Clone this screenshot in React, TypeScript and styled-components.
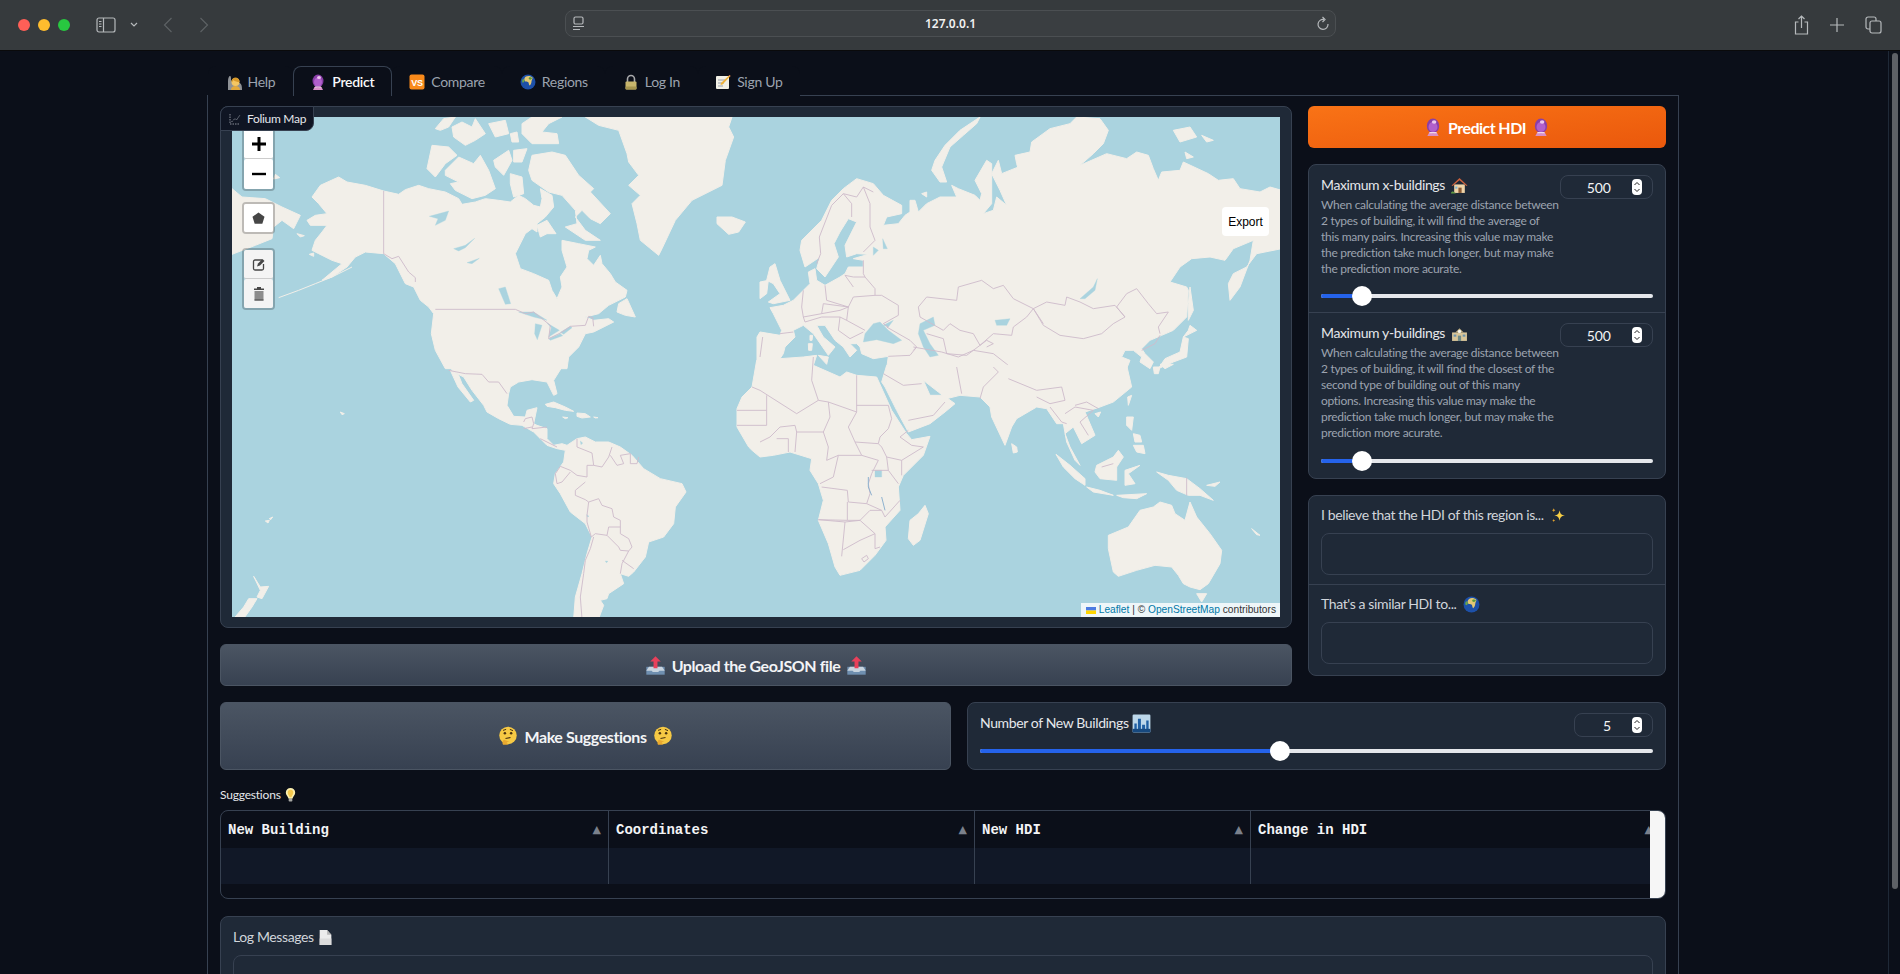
import React from 'react'
import styled, { createGlobalStyle } from 'styled-components'

const GlobalStyle = createGlobalStyle`
  html, body { margin: 0; padding: 0; height: 100%; overflow: hidden; background: #0b0f19; }
  * { box-sizing: border-box; }
  #root { font-family: Lato, "Noto Sans", sans-serif; color: #f3f4f6; }
`

/* ---------- map data, in 3x pixels of each map quarter ---------- */

type Quarter = { x: number; y: number; land: string[]; water: string[]; borders: string[]; rivers?: string[]; strips?: string[] }

const QUARTERS: Quarter[] = [
  {
    x: 0,
    y: 0,
    land: [
      '240,240 265,205 320,180 345,195 400,205 455,222 500,232 520,218 560,205 590,215 640,225 680,245 690,262 730,255 760,245 800,250 835,255 860,235 880,245 905,265 925,270 930,245 925,215 960,235 965,270 940,300 915,320 915,345 900,335 880,350 850,410 865,455 905,470 950,490 960,520 975,545 990,510 985,480 1005,450 990,400 990,370 1040,380 1090,390 1070,400 1065,425 1085,445 1105,415 1110,440 1135,470 1150,495 1185,520 1180,540 1130,565 1100,590 1060,600 1085,610 1130,605 1145,615 1085,645 1060,650 1040,690 1010,720 1005,755 640,755 610,700 598,650 605,590 590,570 565,550 545,510 520,500 490,440 455,410 400,405 370,420 345,450 300,480 270,490 330,440 300,430 260,410 240,400 250,370 270,345 285,325 235,325 225,310 250,295 285,290 260,260',
      '1160,560 1185,545 1210,600 1180,595 1155,585',
      '600,85 650,90 675,115 640,140 610,180 585,155',
      '640,160 680,120 725,140 745,115 770,160 790,215 760,235 720,245 670,220 655,200 680,195 640,175',
      '890,160 900,115 960,105 1000,115 1040,175 1085,215 1075,225 1135,290 1105,320 1075,305 1050,280 1030,300 1060,340 1105,370 1060,370 1000,330 1035,320 1030,280 990,235 950,225 900,190',
      '785,130 830,100 840,130 815,175 790,150',
      '845,100 885,95 870,135 845,135',
      '835,170 870,180 875,230 845,240 835,200',
      '915,325 945,310 972,350 945,350 925,360',
      '610,35 635,5 670,0 650,30 625,40',
      '660,30 690,15 720,30 730,5 760,50 730,70 700,85 665,60',
      '770,20 820,10 830,50 790,60',
      '835,50 855,45 860,75 840,75',
      '870,20 900,0 990,0 950,20 930,45 975,50 980,80 900,80 870,50',
      '1060,0 1100,25 1160,40 1185,110 1190,135 1220,175 1190,205 1225,235 1200,260 1215,320 1225,370 1280,415 1290,395 1330,310 1380,250 1470,205 1480,130 1505,60 1490,30 1500,0',
      '1455,300 1500,300 1540,315 1520,345 1490,352 1455,320',
      '0,215 30,240 100,245 150,270 205,295 185,335 150,310 125,330 120,365 70,385 0,412',
      '130,172 143,182 125,186',
      '232,412 245,408 245,418',
      '195,350 217,356 205,360',
    ],
    water: [
      '592,298 650,282 640,310 610,325 618,305',
      '665,395 700,385 728,364 700,392 680,402',
      '705,437 742,424 720,440',
      '800,515 820,510 836,560 820,562',
      '860,585 905,585 945,610 905,600 880,592',
      '910,620 930,625 916,668 908,650',
      '945,618 982,640 950,660 958,632',
      '950,665 985,650 992,656 955,670',
      '985,646 1015,628 1020,632 995,652',
    ],
    borders: [
      '610,577 850,577 880,590 905,585 955,625 950,665 985,648 1015,628 1060,625 1070,598 1082,602 1085,628',
      '455,222 455,410 480,425 500,418 530,465 550,482 550,495',
    ],
    strips: ['360,450 300,480 250,500 200,520 140,542'],
  },
  {
    x: 1584,
    y: 0,
    land: [
      '-9,660 0,645 60,655 65,640 40,590 30,572 70,565 100,550 130,520 150,500 145,465 165,455 170,490 195,505 240,480 255,470 265,450 310,450 310,430 280,425 325,412 290,410 260,420 255,385 290,315 265,305 240,345 222,380 235,420 215,450 195,480 170,455 180,420 165,430 135,450 120,400 125,370 185,310 215,250 250,215 290,185 340,200 370,235 425,265 425,290 380,300 370,325 415,320 435,295 450,285 450,250 465,250 475,285 500,260 540,240 590,240 575,205 595,215 645,235 660,250 665,230 645,190 680,130 695,140 695,260 670,290 700,280 710,240 740,265 720,220 695,170 715,130 725,170 775,150 790,210 770,140 765,115 810,105 815,75 870,35 930,20 950,0 1020,5 1045,40 1030,80 1000,110 960,145 1040,110 1100,125 1130,105 1165,115 1180,155 1195,190 1205,165 1260,160 1270,135 1345,170 1375,190 1420,185 1440,215 1500,225 1530,210 1565,220 1565,395 1490,410 1460,450 1420,470 1405,500 1410,550 1440,510 1470,430 1480,370 1420,395 1395,430 1350,420 1295,425 1260,450 1230,495 1280,510 1285,520 1280,600 1240,640 1205,655 1170,670 1145,695 1155,710 1180,735 1170,755 1140,735 1145,720 1120,700 1095,700 1085,720 1110,730 1100,755 380,755 385,718 340,725 305,710 300,690 290,680 270,680 290,700 270,720 250,690 225,670 195,625 170,625 190,660 225,690 205,715 160,650 130,625 100,640 105,660 75,690 70,710 50,740 20,745 -9,745',
      '30,450 45,440 60,490 90,550 40,560 25,555 60,530 40,500 20,490',
      '0,495 25,490 20,530 0,545',
      '660,0 600,40 555,85 525,130 515,160 540,195 560,195 545,150 570,90 610,55 650,20',
      '1240,40 1290,30 1310,60 1260,75',
      '1325,55 1360,70 1340,75',
      '1275,105 1300,120 1280,125',
      '485,230 500,225 500,240',
      '1270,660 1310,640 1290,625 1285,640',
      '1270,660 1285,665 1280,720 1240,735 1195,755 1215,725 1260,705',
      '1290,510 1300,580 1285,610 1285,560',
      '145,680 157,680 155,700 146,700',
      '150,655 158,655 156,670 150,670',
      '175,715 205,720 200,742',
    ],
    water: [
      '315,650 340,620 360,615 385,640 425,670 400,680 350,668 310,675',
      '370,625 400,610 385,630',
      '480,620 520,600 525,625 490,640 510,680 535,715 510,720 490,690 475,650',
      '705,610 750,605 740,625 710,625',
      '960,545 1000,510 1012,485 1005,520 975,545',
      '340,390 355,400 340,415',
      '368,365 382,395 370,395',
    ],
    borders: [
      '250,230 215,265 178,360 182,410 170,440',
      '250,230 275,260 275,300',
      '250,230 290,240 310,210 340,225',
      '310,210 330,260 330,330 345,370 310,405',
      '310,430 310,470 315,480 280,480 255,475 280,510',
      '315,480 345,515 345,535 365,535 415,565 415,595 370,620 385,630',
      '195,505 200,550 265,570 280,540 345,535',
      '130,520 125,570 130,600 185,590 190,560 265,570 260,610 315,640',
      '130,600 135,615 185,600 240,600 260,610',
      '185,590 240,580 265,570',
      '100,645 60,650',
      '240,600 235,640 270,665 310,645',
      '380,630 450,670 470,690 460,700',
      '385,718 450,715 470,690',
      '475,570 500,540 590,550 595,510 665,490 700,515 730,505 760,545 820,575 850,620',
      '820,575 860,555 915,565 920,540 960,555 1000,575 1065,565 1095,600 1060,620 1025,650 970,665 900,655 850,625 820,575',
      '1095,600 1070,570 1100,530 1130,515 1165,560 1190,590 1225,585 1195,630 1200,650',
      '475,570 480,600 550,640 570,620 600,640 640,650 660,685 700,650 755,655 760,630 800,600 820,575',
      '500,650 550,665 560,710 620,715 660,685',
      '660,685 680,670 700,680 680,690',
      '460,690 545,705 595,720 640,700 700,710 745,745',
      '1145,700 1185,680 1200,655',
      '8,660 0,720',
    ],
  },
  {
    x: 0,
    y: 750,
    land: [
      '650,-5 1000,-5 990,0 965,40 975,80 965,85 945,45 900,38 860,45 835,60 830,80 825,115 845,148 880,150 885,130 915,122 905,170 915,175 945,185 945,215 965,235 990,230 1005,235 1035,215 1060,210 1090,225 1130,225 1165,240 1200,265 1235,305 1285,335 1350,350 1362,375 1330,420 1325,470 1295,510 1250,525 1240,570 1205,615 1190,628 1165,620 1175,650 1130,680 1125,695 1105,700 1115,715 1100,755 1025,755 1030,690 1050,620 1065,560 1080,510 1060,470 1015,435 985,380 965,350 970,320 995,285 1000,250 975,245 945,235 925,215 905,195 870,175 835,172 800,155 765,135 755,115 720,70 695,30 665,15',
      '655,10 678,60 715,105 725,100 690,50 680,25',
      '940,112 965,105 1000,120 1025,133 1000,130 970,122 945,118',
      '1035,138 1060,140 1075,150 1050,153 1035,148',
      '992,150 1008,152 1000,155',
      '1085,150 1098,152 1090,153',
      '325,135 337,140 330,143',
      '100,462 112,460 108,468',
      '112,455 122,450 116,458',
      '65,628 85,660 110,658 90,695 75,690 85,670',
      '50,695 75,695 60,720 35,755 5,755 35,720',
    ],
    water: ['1045,222 1052,228 1047,233', '1064,443 1071,448 1066,450', '1120,582 1128,583 1123,587'],
    borders: [
      '650,10 700,20 750,22 770,45 800,45 825,80',
      '875,165 880,155 900,150 905,170 900,185 945,180',
      '875,185 900,180',
      '925,215 945,225 975,240',
      '1035,215 1035,240 1080,258 1085,295 1110,300 1130,270 1140,240',
      '1135,265 1155,295 1175,290 1165,265 1195,260 1195,290 1215,290 1220,270',
      '985,298 1015,310 1035,325 1065,330 1065,295 1085,295',
      '985,298 970,320 975,350 990,345 1015,315',
      '1060,345 1030,370 1030,385 1060,398 1070,405 1100,395 1110,415 1140,425 1145,450 1165,460 1165,500 1190,515 1200,540 1190,552 1170,590 1165,620',
      '1070,405 1065,445 1065,465 1078,510 1090,500 1125,505 1160,540 1165,550 1190,552',
      '1125,505 1130,480 1165,480',
      '1085,510 1075,545 1060,580 1055,620 1045,690 1050,755',
      '1170,580 1205,605',
    ],
  },
  {
    x: 1584,
    y: 750,
    land: [
      '-69,125 -54,90 -24,60 -10,-20 20,-25 60,-25 130,-30 170,-35 160,-5 240,30 260,15 290,25 350,30 395,130 440,200 455,218 510,208 490,265 430,325 415,360 420,430 375,480 378,520 345,565 300,610 240,625 225,600 205,530 175,460 190,400 175,350 150,310 155,275 90,255 40,265 0,270 -24,250 -34,240 -69,180',
      '380,-5 1100,-5 1115,60 1060,105 1020,120 975,135 1005,205 965,230 940,180 915,200 930,240 960,295 945,280 920,225 910,170 890,170 860,125 830,120 770,155 755,180 735,235 695,150 690,120 660,90 600,85 560,95 535,75 490,40 510,85 550,85 585,110 555,135 510,170 445,195 410,130 375,60 365,45',
      '1180,0 1200,0 1195,20 1183,20',
      '1200,-8 1240,-8 1215,5',
      '755,230 770,240 772,255 760,258',
      '1103,90 1115,85 1105,115',
      '1005,140 1022,135 1015,150',
      '1100,150 1120,150 1115,190 1100,175',
      '1120,235 1150,235 1155,260 1130,255',
      '1120,200 1140,205 1145,225 1125,225',
      '1010,295 1060,270 1075,250 1090,270 1070,300 1070,340 1020,335 1005,315',
      '888,262 930,295 975,335 975,355 945,335 910,300',
      '980,360 1020,370 1060,385 1000,375',
      '1095,310 1140,295 1105,320 1125,350 1095,355',
      '1190,315 1225,325 1280,335 1320,365 1360,400 1320,385 1285,385 1250,370 1225,340',
      '1340,355 1380,345 1365,358',
      '1070,385 1160,380 1130,395 1090,392',
      '1045,505 1105,480 1140,430 1180,420 1200,405 1235,415 1245,440 1275,460 1290,405 1310,450 1350,500 1385,550 1380,590 1345,650 1320,668 1290,660 1270,650 1255,625 1235,600 1185,595 1130,610 1075,628 1060,615 1045,545',
      '1310,680 1340,680 1325,705',
      '495,415 505,440 480,520 460,535 445,515 450,460 475,440',
      '1475,485 1500,505 1490,503',
    ],
    water: ['345,310 365,310 365,330 345,330'],
    borders: [
      '-24,60 0,70 110,140 175,100 205,105 290,135 290,25',
      '160,-30 155,40 175,100',
      '290,115 385,115',
      '290,135 265,180 285,225 305,265',
      '205,105 210,150 190,195 205,240 200,280',
      '385,115 395,155 385,185 360,210 355,230 285,225',
      '-69,130 20,130 20,85',
      '20,130 20,175 -69,175',
      '0,225 30,210 60,180 105,175 110,195 190,195',
      '50,215 85,215 85,255',
      '110,195 105,255',
      '200,280 235,265 305,265 355,280',
      '355,230 365,240 380,270 425,280 490,240 455,235 420,210 445,190',
      '235,265 220,330 180,350',
      '355,280 335,320 325,350 330,380 320,410 265,405 262,370 185,360',
      '425,280 425,325',
      '380,270 385,310 415,350',
      '335,310 385,310',
      '262,405 262,460 175,458',
      '262,460 300,460 330,430 365,430 320,410',
      '365,430 375,450 420,400',
      '175,458 255,465 245,568',
      '255,465 300,460 345,500 300,520 250,548',
      '345,500 345,545 360,540',
      '305,575 320,565 325,575 312,585 305,575',
      '370,20 430,55 485,50',
      '445,160 520,145 555,105',
      '590,0 605,80',
      '660,95 670,60 715,15 700,0',
      '745,35 830,70 905,60 915,100 870,110 830,90',
      '870,120 905,165 920,170',
      '915,140 945,120 1000,130 960,165 985,205',
      '945,115 980,105 1015,125',
      '1280,332 1280,385',
      '1025,300 1060,290',
    ],
    rivers: ['325,330 325,360 335,385', '365,390 375,430'],
  },
]

const HOUSE_TEXT = [
  'When calculating the average distance between',
  '2 types of building, it will find the average of',
  'this many pairs. Increasing this value may make',
  'the prediction take much longer, but may make',
  'the prediction more acurate.',
]

const SCHOOL_TEXT = [
  'When calculating the average distance between',
  '2 types of building, it will find the closest of the',
  'second type of building out of this many',
  'options. Increasing this value may make the',
  'prediction take much longer, but may make the',
  'prediction more acurate.',
]

/* ---------- emoji drawings ---------- */

type EmojiKind =
  | 'person' | 'ball' | 'vs' | 'globe' | 'lock' | 'memo' | 'house' | 'school'
  | 'sparkles' | 'tray' | 'thinking' | 'city' | 'bulb' | 'page'

const EmojiSvg = styled.svg<{ $size: number }>`
  width: ${(p) => p.$size}px;
  height: ${(p) => p.$size}px;
  flex: none;
  display: inline-block;
`

const Emoji: React.FC<{ kind: EmojiKind; size?: number }> = ({ kind, size = 16 }) => {
  const art: Record<EmojiKind, React.ReactNode> = {
    person: (
      <>
        <path d="M2 16V7c0-3 1-5 2-5s1 2 1 4l2 3h6c2 0 3 2 3 7z" fill="#8f9296" />
        <circle cx="9.500" cy="8" r="4" fill="#f5c662" />
        <path d="M5.500 8c0-3 2-4.500 4-4.500s4 1.500 4 4.500c-2 0-5-.5-6-2-.5 1-1 2-2 2z" fill="#d99a2b" />
        <path d="M5 16c0-3 2-4 4.500-4s4.500 1 4.500 4z" fill="#e2a83c" />
      </>
    ),
    ball: (
      <>
        <path d="M4.500 13h7l1.500 3H3z" fill="#d890c8" />
        <ellipse cx="8" cy="7" rx="5.500" ry="6.500" fill="#8a3fa8" />
        <ellipse cx="8" cy="8" rx="4" ry="4.500" fill="#b160cc" />
        <ellipse cx="9" cy="3.500" rx="2" ry="1.500" fill="#ecc6ee" />
        <path d="M5 12.500h6l.5 1h-7z" fill="#f3d9e8" />
      </>
    ),
    vs: (
      <>
        <rect x="0.500" y="0.500" width="15" height="15" rx="2" fill="#f98a1a" />
        <text x="8" y="11.500" fontSize="9" fontWeight="700" textAnchor="middle" fill="#fff" fontFamily="Liberation Sans, sans-serif">VS</text>
      </>
    ),
    globe: (
      <>
        <circle cx="8" cy="8" r="7.500" fill="#1d50a8" />
        <path d="M6 2.500c2-1 5-.5 6.500 1 .5 1-1 2.500-1 4 0 1.500-1 3.500-2 4-1-1-.5-3-1.500-3.500s-3 0-3.500-1.500 0-3 1.500-4z" fill="#e3c874" />
        <path d="M9 3.500c1-.5 2.500 0 3 .5.200 1-1.500 2-2.500 1.500S8.500 4 9 3.500z" fill="#5b9a3c" />
        <path d="M3 5c1 0 1.500 1 1.500 2S3 9 2.500 8.500 2 5.500 3 5z" fill="#6aa64a" />
      </>
    ),
    lock: (
      <>
        <path d="M4.500 8V5a3.500 3.500 0 0 1 7 0v3" fill="none" stroke="#a9a9ab" strokeWidth="1.600" />
        <rect x="2.500" y="7.500" width="11" height="8" rx="1" fill="#c7b56c" />
        <rect x="2.500" y="12.500" width="11" height="3" rx="1" fill="#a6954f" />
      </>
    ),
    memo: (
      <>
        <rect x="1" y="2" width="13" height="13" rx="1" fill="#f2f0e6" />
        <path d="M3 6h8M3 9h6M3 12h5" stroke="#9aa0ad" strokeWidth="1" />
        <path d="M14.500 1l1 1-8 8.500-2 .5.500-2z" fill="#f0b33c" />
        <path d="M14 1.500l1 1 .5-.5-1-1z" fill="#e45b5b" />
      </>
    ),
    house: (
      <>
        <rect x="3" y="7" width="10" height="8" fill="#efd4a8" />
        <path d="M8 1l7.500 7-1 .5L8 3 1.500 8.500l-1-.5z" fill="#c9603c" />
        <rect x="7" y="10" width="3" height="5" fill="#8b5a34" />
        <rect x="4" y="9" width="2" height="2" fill="#7fb8d8" />
        <path d="M0 15.500c0-2 2-2 2.500-1.500s1.500 0 2 1.500z" fill="#5f9a42" />
      </>
    ),
    school: (
      <>
        <rect x="1" y="7" width="14" height="8" fill="#d8c598" />
        <path d="M4 7l4-4 4 4z" fill="#b8a77c" />
        <circle cx="8" cy="6" r="1.600" fill="#f6f6ee" />
        <rect x="2.500" y="9" width="2.500" height="2" fill="#6d95ae" />
        <rect x="11" y="9" width="2.500" height="2" fill="#6d95ae" />
        <rect x="6.500" y="10" width="3" height="5" fill="#6f8a86" />
      </>
    ),
    sparkles: (
      <>
        <path d="M9 3c.5 3 1.500 4.500 5 5-3.500.5-4.500 2-5 5-.5-3-1.500-4.500-5-5 3.500-.5 4.500-2 5-5z" fill="#f7ce46" />
        <path d="M3.500 1c.2 1.200.6 1.800 1.800 2-1.200.2-1.600.8-1.800 2-.2-1.200-.6-1.800-1.800-2 1.200-.2 1.600-.8 1.800-2z" fill="#e0a230" />
        <path d="M3.500 11c.2 1 .5 1.500 1.500 1.700-1 .2-1.300.7-1.500 1.700-.2-1-.5-1.500-1.500-1.700 1-.2 1.300-.7 1.500-1.700z" fill="#e0a230" />
      </>
    ),
    tray: (
      <>
        <path d="M1 9h14v6H1z" fill="#6f8fb0" />
        <path d="M3 9h10l2 3H11l-1 1H6l-1-1H1z" fill="#c7d3de" />
        <path d="M8 1l4 4H9.500v5h-3V5H4z" fill="#e8405a" />
      </>
    ),
    thinking: (
      <>
        <circle cx="8" cy="7.500" r="7" fill="#f6c944" />
        <circle cx="5.500" cy="5.800" r="1" fill="#4a3310" />
        <circle cx="10.500" cy="5.800" r="1" fill="#4a3310" />
        <path d="M4 3.500l2.500-.8M9.500 2.700l2.500 1" stroke="#4a3310" strokeWidth=".8" />
        <path d="M6 10l4-.8" stroke="#4a3310" strokeWidth="1" />
        <path d="M4 15c-1-2 0-4 1-4l4 1.500-2 .5 1 2z" fill="#e9a92f" />
      </>
    ),
    city: (
      <>
        <rect x="0.500" y="0.500" width="15" height="15" rx="1" fill="#bcd7ea" />
        <path d="M2 15V8h2v7zM5 15V4h2.500v11zM8.500 15V9H11v6zM12 15V5.500h2V15z" fill="#1f5fa3" />
        <rect x="0.500" y="12.500" width="15" height="3" fill="#17497f" />
      </>
    ),
    bulb: (
      <>
        <path d="M8 1a5 5 0 0 1 5 5c0 2.500-2 3.500-3 6.500H6C5 9.500 3 8.500 3 6a5 5 0 0 1 5-5z" fill="#fbeeb0" />
        <path d="M8 3a3 3 0 0 1 3 3c0 1.500-1.500 3-2 5H7c-.5-2-2-3.500-2-5a3 3 0 0 1 3-3z" fill="#f5c94e" />
        <rect x="6" y="12.500" width="4" height="3" rx="1" fill="#a8a8a4" />
      </>
    ),
    page: (
      <>
        <path d="M2.500 1h7l4 4.500V15h-11z" fill="#ececec" />
        <path d="M9.500 1l4 4.500h-4z" fill="#b6b6b6" />
        <path d="M2.500 9h11v6h-11z" fill="#dcdcdc" />
      </>
    ),
  }
  return <EmojiSvg $size={size} viewBox="0 0 16 16">{art[kind]}</EmojiSvg>
}

/* ---------- browser chrome ---------- */

const Chrome = styled.header`
  height: 51px;
  background: #363a3d;
  border-bottom: 1px solid #0a0a0b;
  display: grid;
  grid-template-columns: 565px 771px 1fr;
  align-items: center;
`
const ChromeLeft = styled.div`
  display: flex;
  align-items: center;
  padding-left: 18px;
`
const Light = styled.span<{ $c: string }>`
  width: 12px;
  height: 12px;
  border-radius: 50%;
  background: ${(p) => p.$c};
  margin-right: 8px;
`
const ChromeIcon = styled.svg<{ $gap?: number; $dim?: boolean }>`
  flex: none;
  fill: none;
  stroke: ${(p) => (p.$dim ? '#5d6164' : '#b6b9bc')};
  stroke-width: 1.2;
  margin-left: ${(p) => p.$gap ?? 0}px;
`
const AddressBar = styled.div`
  height: 27px;
  margin-top: -3px;
  border: 1px solid #4b4f52;
  border-radius: 8px;
  background: #3a3e41;
  display: flex;
  align-items: center;
  justify-content: space-between;
  padding: 0 5px 0 6px;
`
const AddressText = styled.span`
  font: 600 12px "Noto Sans", sans-serif;
  color: #f1f1f1;
`
const ChromeRight = styled.div`
  display: flex;
  align-items: center;
  justify-content: flex-end;
  padding-right: 18px;
  gap: 21px;
`

/* ---------- page ---------- */

const Viewport = styled.div`
  height: 923px;
  display: flex;
  overflow: hidden;
`
const Page = styled.main`
  flex: 1;
  min-width: 0;
  padding: 15px 0 0 207px;
`
const Gutter = styled.div`
  width: 12px;
  border-left: 1px solid #1f2937;
  padding: 2px 2px 0 3px;
`
const Thumb = styled.div`
  height: 836px;
  border-radius: 4px;
  background: #5d6066;
`
const Tabs = styled.nav`
  display: flex;
  height: 29px;
  padding-left: 1px;
  position: relative;
  z-index: 1;
`
const Tab = styled.div<{ $active?: boolean }>`
  display: flex;
  align-items: center;
  gap: 6px;
  height: 30px;
  padding: 0 16.5px;
  font-size: 14px;
  letter-spacing: -0.3px;
  color: ${(p) => (p.$active ? '#f9fafb' : '#9ca3af')};
  font-weight: ${(p) => (p.$active ? 600 : 400)};
  background: #0b0f19;
  border: 1px solid ${(p) => (p.$active ? '#374151' : 'transparent')};
  border-bottom: 0;
  border-radius: 8px 8px 0 0;
`
const TabBody = styled.section`
  width: 1472px;
  height: 900px;
  border: 1px solid #374151;
  padding: 10px 12px;
`
const TopRow = styled.div`
  display: grid;
  grid-template-columns: 1072px 358px;
  gap: 16px;
`
const Column = styled.div`
  display: flex;
  flex-direction: column;
  gap: 16px;
`
const Panel = styled.div`
  background: #1f2937;
  border: 1px solid #374151;
  border-radius: 8px;
  overflow: hidden;
`
const MapBlock = styled(Panel)`
  position: relative;
  height: 522px;
  padding: 10px 12px 10px 11px;
  overflow: visible;
`
const MapLabel = styled.div`
  position: absolute;
  left: -1px;
  top: -1px;
  z-index: 5;
  height: 25px;
  width: 94px;
  display: flex;
  align-items: center;
  gap: 6px;
  padding-left: 8px;
  font-size: 12px;
  letter-spacing: -0.3px;
  color: #e5e7eb;
  background: #0f1523;
  border: 1px solid #374151;
  border-radius: 8px 0 8px 0;
`
const MapCanvas = styled.div`
  position: relative;
  width: 1048px;
  height: 500px;
  overflow: hidden;
  background: #aad3df;
  font-family: "Liberation Sans", Arial, sans-serif;
`
const MapSvg = styled.svg`
  display: block;
  width: 100%;
  height: 100%;
`
const Land = styled.polygon`
  fill: #f2efe9;
  stroke: #f2efe9;
  stroke-width: 3;
  stroke-linejoin: round;
`
const Water = styled.polygon`
  fill: #aad3df;
  stroke: #aad3df;
  stroke-width: 1;
  stroke-linejoin: round;
`
const Strip = styled.polyline`
  fill: none;
  stroke: #f2efe9;
  stroke-width: 3;
`
const Border = styled.polyline`
  fill: none;
  stroke: #cfbccb;
  stroke-width: 2.800;
  stroke-linejoin: round;
`
const River = styled.polyline`
  fill: none;
  stroke: #8fb2cf;
  stroke-width: 3;
`
const ControlBox = styled.div<{ $top: number }>`
  position: absolute;
  left: 10px;
  top: ${(p) => p.$top}px;
  width: 33px;
  border: 2px solid rgba(0, 0, 0, 0.22);
  border-radius: 4px;
  background-clip: padding-box;
`
const ControlButton = styled.div<{ $muted?: boolean; $last?: boolean; $h: number }>`
  height: ${(p) => p.$h}px;
  display: flex;
  align-items: center;
  justify-content: center;
  background: ${(p) => (p.$muted ? '#f4f4f4' : '#fff')};
  border-bottom: ${(p) => (p.$last ? 0 : '1px solid #ccc')};
  border-radius: 2px;
`
const Export = styled.div`
  position: absolute;
  left: 990px;
  top: 90px;
  width: 47px;
  height: 29px;
  background: #fff;
  border-radius: 4px;
  color: #000;
  font-size: 12px;
  display: flex;
  align-items: center;
  justify-content: center;
`
const Attribution = styled.div`
  position: absolute;
  right: 0;
  bottom: 0;
  height: 14px;
  padding: 0 4px 0 5px;
  background: rgba(255, 255, 255, 0.8);
  font-size: 10.200px;
  line-height: 14px;
  color: #333;
  display: flex;
  align-items: center;
  white-space: pre;
`
const MapLink = styled.span`
  color: #0078a8;
`
const Flag = styled.svg`
  width: 10px;
  height: 7px;
  margin-right: 3px;
`

const GreyButton = styled.div<{ $height: number }>`
  height: ${(p) => p.$height}px;
  display: flex;
  align-items: center;
  justify-content: center;
  gap: 6px;
  font-size: 16px;
  font-weight: 700;
  letter-spacing: -0.42px;
  color: #f3f4f6;
  background: linear-gradient(180deg, #4b5563, #374151);
  border: 1px solid #4b5563;
  border-radius: 6px;
`
const PredictButton = styled.div`
  height: 42px;
  display: flex;
  align-items: center;
  justify-content: center;
  gap: 6px;
  font-size: 16px;
  font-weight: 700;
  letter-spacing: -0.55px;
  color: #fff;
  background: linear-gradient(to bottom right, #f97316, #ea580c);
  border-radius: 6px;
`
const SettingBlock = styled.div<{ $last?: boolean; $height: number; $pad?: number }>`
  height: ${(p) => p.$height}px;
  padding: ${(p) => p.$pad ?? 10}px 12px 0 12px;
  border-bottom: ${(p) => (p.$last ? 0 : '1px solid #374151')};
`
const SettingHead = styled.div`
  display: flex;
  justify-content: space-between;
  align-items: flex-start;
`
const LabelRow = styled.div<{ $dim?: boolean }>`
  display: flex;
  align-items: center;
  gap: 3px;
  height: 20px;
  font-size: 14px;
  line-height: 20px;
  letter-spacing: -0.38px;
  white-space: pre;
  color: ${(p) => (p.$dim ? '#d1d5db' : '#e5e7eb')};
`
const Description = styled.div`
  font-size: 12px;
  line-height: 16px;
  letter-spacing: -0.3px;
  color: #9ca3af;
  white-space: nowrap;
  padding-top: 2px;
  width: 238px;
`
const NumberBox = styled.div<{ $width: number }>`
  width: ${(p) => p.$width}px;
  height: 24px;
  border: 1px solid #374151;
  border-radius: 8px;
  display: flex;
  align-items: center;
  justify-content: flex-end;
  padding-right: 10px;
  gap: 21px;
  font-size: 14px;
  color: #f3f4f6;
`
const Spinner = styled.svg`
  width: 10px;
  height: 16px;
`
const SliderTrack = styled.div<{ $top: number }>`
  position: relative;
  height: 4px;
  margin-top: ${(p) => p.$top}px;
  background: #e5e7eb;
  border-radius: 2px;
`
const SliderFill = styled.div`
  height: 100%;
  background: #2563eb;
  border-radius: 2px 0 0 2px;
`
const SliderThumb = styled.div`
  position: absolute;
  top: -8px;
  width: 20px;
  height: 20px;
  margin-left: -10px;
  border-radius: 50%;
  background: #fff;
`
const TextBox = styled.div`
  height: 42px;
  margin-top: 8px;
  border: 1px solid #374151;
  border-radius: 8px;
`
const SecondRow = styled.div`
  display: grid;
  grid-template-columns: 731px 699px;
  gap: 16px;
  margin-top: 16px;
  height: 68px;
`
const CountPanel = styled(Panel)`
  padding: 10px 12px 0 12px;
`
const SmallLabel = styled.div`
  display: flex;
  align-items: center;
  gap: 2px;
  height: 16px;
  margin: 16px 0 8px;
  font-size: 12px;
  letter-spacing: -0.2px;
  white-space: pre;
  color: #e5e7eb;
`
const TableFrame = styled.div`
  position: relative;
  height: 89px;
  border: 1px solid #374151;
  border-radius: 8px;
  overflow: hidden;
`
const TableGrid = styled.div`
  display: grid;
  grid-template-columns: 387px 366px 276px 410px;
  grid-template-rows: 37px 36px;
`
const HeadCell = styled.div<{ $first?: boolean }>`
  display: flex;
  align-items: center;
  justify-content: space-between;
  padding: 0 7px;
  border-left: ${(p) => (p.$first ? 0 : '1px solid #374151')};
  font: 700 14px "Liberation Mono", monospace;
  color: #f3f4f6;
`
const SortMark = styled.span`
  font: 11px "DejaVu Sans", sans-serif;
  color: #7b818c;
`
const BodyCell = styled.div<{ $first?: boolean }>`
  background: #111827;
  border-left: ${(p) => (p.$first ? 0 : '1px solid #374151')};
`
const TableScroll = styled.div`
  position: absolute;
  top: 0;
  right: 0;
  bottom: 0;
  width: 15px;
  background: #f6f6f6;
`
const LogPanel = styled(Panel)`
  margin-top: 17px;
  height: 200px;
  padding: 10px 12px;
`
const LogBox = styled.div`
  margin-top: 8px;
  height: 120px;
  border: 1px solid #374151;
  border-radius: 8px;
`

const Slider: React.FC<{ percent: number; top: number }> = ({ percent, top }) => (
  <SliderTrack $top={top}>
    <SliderFill style={{ width: `${percent}%` }} />
    <SliderThumb style={{ left: `${percent}%` }} />
  </SliderTrack>
)

const NumberField: React.FC<{ value: number; width: number }> = ({ value, width }) => (
  <NumberBox $width={width}>
    {value}
    <Spinner viewBox="0 0 10 16">
      <rect width="10" height="16" rx="4" fill="#fff" />
      <path d="M2.500 6L5 3.500 7.500 6M2.500 10L5 12.500 7.500 10" fill="none" stroke="#222" strokeWidth="1" />
    </Spinner>
  </NumberBox>
)

const WorldMap = () => (
  <MapSvg viewBox="0 0 3144 1500" preserveAspectRatio="none">
    {QUARTERS.map((q) => (
      <g key={`${q.x}-${q.y}`} transform={`translate(${q.x},${q.y})`}>
        {q.land.map((p) => <Land key={p} points={p} />)}
        {q.strips?.map((p) => <Strip key={p} points={p} />)}
        {q.water.map((p) => <Water key={p} points={p} />)}
        {q.borders.map((p) => <Border key={p} points={p} />)}
        {q.rivers?.map((p) => <River key={p} points={p} />)}
      </g>
    ))}
  </MapSvg>
)

const MapControls = () => (
  <>
    <ControlBox $top={10}>
      <ControlButton $h={30}>
        <svg width="16" height="16" viewBox="0 0 16 16"><path d="M8 1v14M1 8h14" stroke="#000" strokeWidth="3" /></svg>
      </ControlButton>
      <ControlButton $h={30} $last>
        <svg width="16" height="16" viewBox="0 0 16 16"><path d="M1 8h14" stroke="#000" strokeWidth="2.400" /></svg>
      </ControlButton>
    </ControlBox>
    <ControlBox $top={85}>
      <ControlButton $h={28} $last>
        <svg width="13" height="13" viewBox="0 0 13 13"><path d="M6.500.5l6 4.300-2.200 7H2.700L.5 4.800z" fill="#464646" /></svg>
      </ControlButton>
    </ControlBox>
    <ControlBox $top={131}>
      <ControlButton $h={29} $muted>
        <svg width="14" height="14" viewBox="0 0 14 14" fill="none" stroke="#464646" strokeWidth="1.300">
          <path d="M10 3H3a1.500 1.500 0 0 0-1.500 1.500v7A1.500 1.500 0 0 0 3 13h7a1.500 1.500 0 0 0 1.500-1.500V7" />
          <path d="M5 9.500l1-3L10.500 2l2 2-4.500 4.500z" fill="#464646" stroke="none" />
        </svg>
      </ControlButton>
      <ControlButton $h={29} $muted $last>
        <svg width="12" height="15" viewBox="0 0 12 15">
          <path d="M4 1h4v1.500H4zM1 2.500h10V4H1z" fill="#464646" />
          <path d="M1.500 5h9v9.500h-9z" fill="#8c8c8c" />
          <path d="M1.500 13.500h9v1h-9z" fill="#464646" />
        </svg>
      </ControlButton>
    </ControlBox>
  </>
)

const App: React.FC = () => {
  return (
    <>
      <GlobalStyle />
      <Chrome>
        <ChromeLeft>
          <Light $c="#ff5f57" />
          <Light $c="#febc2e" />
          <Light $c="#28c840" />
          <ChromeIcon $gap={18} width="20" height="16" viewBox="0 0 20 16">
            <rect x="1" y="1" width="18" height="14" rx="2" />
            <path d="M7.500 1v14M3 4.500h2.500M3 7h2.500M3 9.500h2.500" />
          </ChromeIcon>
          <ChromeIcon $gap={14} width="8" height="6" viewBox="0 0 8 6">
            <path d="M1 1l3 3 3-3" />
          </ChromeIcon>
          <ChromeIcon $gap={25} $dim width="10" height="16" viewBox="0 0 10 16">
            <path d="M8.500 1L1.500 8l7 7" />
          </ChromeIcon>
          <ChromeIcon $gap={26} $dim width="10" height="16" viewBox="0 0 10 16">
            <path d="M1.500 1l7 7-7 7" />
          </ChromeIcon>
        </ChromeLeft>
        <AddressBar>
          <ChromeIcon width="13" height="15" viewBox="0 0 13 15">
            <rect x="2" y="1" width="9" height="7" rx="1.500" />
            <path d="M1 10.500h11M1 13.500h7" />
          </ChromeIcon>
          <AddressText>127.0.0.1</AddressText>
          <ChromeIcon width="14" height="15" viewBox="0 0 14 15">
            <path d="M8 3.500A5 5 0 1 0 12 8M6.500 1l2.500 2.500L6.500 6" />
          </ChromeIcon>
        </AddressBar>
        <ChromeRight>
          <ChromeIcon width="15" height="20" viewBox="0 0 15 20">
            <path d="M4.500 7H1.500v12h12V7h-3M7.500 13V1M4.500 4l3-3 3 3" />
          </ChromeIcon>
          <ChromeIcon width="14" height="14" viewBox="0 0 14 14">
            <path d="M7 0v14M0 7h14" />
          </ChromeIcon>
          <ChromeIcon width="17" height="18" viewBox="0 0 17 18">
            <rect x="5" y="5" width="11" height="12" rx="2" />
            <path d="M5 13H3a2 2 0 0 1-2-2V3a2 2 0 0 1 2-2h6a2 2 0 0 1 2 2v2" />
          </ChromeIcon>
        </ChromeRight>
      </Chrome>

      <Viewport>
        <Page>
          <Tabs>
            <Tab><Emoji kind="person" />Help</Tab>
            <Tab $active><Emoji kind="ball" />Predict</Tab>
            <Tab><Emoji kind="vs" />Compare</Tab>
            <Tab><Emoji kind="globe" />Regions</Tab>
            <Tab><Emoji kind="lock" />Log In</Tab>
            <Tab><Emoji kind="memo" />Sign Up</Tab>
          </Tabs>
          <TabBody>
            <TopRow>
              <Column>
                <MapBlock>
                  <MapLabel>
                    <svg width="12" height="12" viewBox="0 0 12 12" fill="none" stroke="#8b909a" strokeWidth="1">
                      <path d="M1 1v10h10M2.500 9L6 5.500l1.500 1.500L11 2" strokeDasharray="1.500 1" />
                    </svg>
                    Folium Map
                  </MapLabel>
                  <MapCanvas>
                    <WorldMap />
                    <MapControls />
                    <Export>Export</Export>
                    <Attribution>
                      <Flag viewBox="0 0 10 7">
                        <rect width="10" height="3.500" fill="#4c7be1" />
                        <rect y="3.500" width="10" height="3.500" fill="#ffd500" />
                      </Flag>
                      <MapLink>Leaflet</MapLink> | © <MapLink>OpenStreetMap</MapLink> contributors
                    </Attribution>
                  </MapCanvas>
                </MapBlock>
                <GreyButton $height={42}>
                  <Emoji kind="tray" size={21} />Upload the GeoJSON file<Emoji kind="tray" size={21} />
                </GreyButton>
              </Column>
              <Column>
                <PredictButton>
                  <Emoji kind="ball" size={18} />Predict HDI<Emoji kind="ball" size={18} />
                </PredictButton>
                <Panel>
                  <SettingBlock $height={148}>
                    <SettingHead>
                      <div>
                        <LabelRow>Maximum x-buildings <Emoji kind="house" size={17} /></LabelRow>
                        <Description>
                          {HOUSE_TEXT.map((line) => <div key={line}>{line}</div>)}
                        </Description>
                      </div>
                      <NumberField value={500} width={93} />
                    </SettingHead>
                    <Slider percent={12.3} top={17} />
                  </SettingBlock>
                  <SettingBlock $last $height={165}>
                    <SettingHead>
                      <div>
                        <LabelRow>Maximum y-buildings <Emoji kind="school" size={17} /></LabelRow>
                        <Description>
                          {SCHOOL_TEXT.map((line) => <div key={line}>{line}</div>)}
                        </Description>
                      </div>
                      <NumberField value={500} width={93} />
                    </SettingHead>
                    <Slider percent={12.3} top={18} />
                  </SettingBlock>
                </Panel>
                <Panel>
                  <SettingBlock $height={89} $pad={9}>
                    <LabelRow $dim>I believe that the HDI of this region is... <Emoji kind="sparkles" size={17} /></LabelRow>
                    <TextBox />
                  </SettingBlock>
                  <SettingBlock $last $height={90} $pad={9}>
                    <LabelRow $dim>That's a similar HDI to... <Emoji kind="globe" size={17} /></LabelRow>
                    <TextBox />
                  </SettingBlock>
                </Panel>
              </Column>
            </TopRow>

            <SecondRow>
              <GreyButton $height={68}>
                <Emoji kind="thinking" size={20} />Make Suggestions<Emoji kind="thinking" size={20} />
              </GreyButton>
              <CountPanel>
                <SettingHead>
                  <LabelRow>Number of New Buildings<Emoji kind="city" size={19} /></LabelRow>
                  <NumberField value={5} width={79} />
                </SettingHead>
                <Slider percent={44.6} top={12} />
              </CountPanel>
            </SecondRow>

            <SmallLabel>Suggestions<Emoji kind="bulb" size={15} /></SmallLabel>
            <TableFrame>
              <TableGrid>
                <HeadCell $first>New Building<SortMark>▲</SortMark></HeadCell>
                <HeadCell>Coordinates<SortMark>▲</SortMark></HeadCell>
                <HeadCell>New HDI<SortMark>▲</SortMark></HeadCell>
                <HeadCell>Change in HDI<SortMark>▲</SortMark></HeadCell>
                <BodyCell $first />
                <BodyCell />
                <BodyCell />
                <BodyCell />
              </TableGrid>
              <TableScroll />
            </TableFrame>

            <LogPanel>
              <LabelRow $dim>Log Messages<Emoji kind="page" size={17} /></LabelRow>
              <LogBox />
            </LogPanel>
          </TabBody>
        </Page>
        <Gutter>
          <Thumb />
        </Gutter>
      </Viewport>
    </>
  )
}

export default App
